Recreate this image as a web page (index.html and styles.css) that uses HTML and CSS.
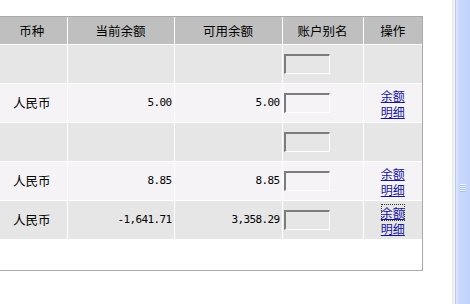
FILE: index.html
```html
<!DOCTYPE html>
<html>
<head>
<meta charset="utf-8">
<link rel="stylesheet" href="styles.css">
</head>
<body>
<div class="page">
  <div class="main">
    <div class="box">
      <table class="grid">
        <colgroup>
          <col class="c1"><col class="c2"><col class="c3"><col class="c4"><col class="c5">
        </colgroup>
        <thead>
          <tr class="head">
            <th>币种</th><th>当前余额</th><th>可用余额</th><th>账户别名</th><th class="last">操作</th>
          </tr>
        </thead>
        <tbody>
          <tr class="odd">
            <td></td><td class="num"></td><td class="num"></td>
            <td class="alias"><input class="field" type="text"></td><td class="last"></td>
          </tr>
          <tr class="even">
            <td class="cur">人民币</td><td class="num">5.00</td><td class="num">5.00</td>
            <td class="alias"><input class="field" type="text"></td>
            <td class="last ops"><a href="#">余额</a><a href="#">明细</a></td>
          </tr>
          <tr class="odd">
            <td></td><td class="num"></td><td class="num"></td>
            <td class="alias"><input class="field" type="text"></td><td class="last"></td>
          </tr>
          <tr class="even">
            <td class="cur">人民币</td><td class="num">8.85</td><td class="num">8.85</td>
            <td class="alias"><input class="field" type="text"></td>
            <td class="last ops"><a href="#">余额</a><a href="#">明细</a></td>
          </tr>
          <tr class="odd">
            <td class="cur">人民币</td><td class="num">-1,641.71</td><td class="num">3,358.29</td>
            <td class="alias"><input class="field" type="text"></td>
            <td class="last ops"><a href="#" class="focus">余额</a><a href="#">明细</a></td>
          </tr>
        </tbody>
      </table>
    </div>
  </div>
  <div class="scrollbar">
    <div class="track"></div>
    <div class="thumb">
      <div class="grip"><span></span><span></span><span></span><span></span></div>
    </div>
  </div>
</div>
</body>
</html>
```
FILE: styles.css
```css
html, body {
  margin: 0;
  padding: 0;
  background: #ffffff;
}
body {
  font-family: "Noto Sans CJK SC", "Noto Sans", sans-serif;
  font-size: 12px;
  color: #000;
}
.page {
  display: flex;
  width: 470px;
  height: 304px;
  overflow: hidden;
}
.main {
  width: 452px;
  flex: none;
  padding-top: 16px;
  overflow: hidden;
}
.box {
  margin-left: -4px;
  width: 425px;
  height: 253px;
  border: 1px solid #a9a9a9;
}
.grid {
  border-collapse: collapse;
  table-layout: fixed;
  width: 425px;
}
.c1 { width: 70px; }
.c2 { width: 107px; }
.c3 { width: 108px; }
.c4 { width: 81px; }
.c5 { width: 59px; }
.grid th, .grid td {
  padding: 0;
  border-right: 1px solid #ffffff;
  border-bottom: 1px solid #ffffff;
  text-align: center;
  vertical-align: middle;
  line-height: 16px;
  font-size: 12.5px;
}
.grid th.last, .grid td.last {
  border-right: none;
}
.head th {
  height: 27px;
  background: #bfbfbf;
  font-weight: normal;
}
.grid tbody td {
  height: 38px;
}
.odd td { background: #e6e6e6; }
.even td { background: #f6f3f6; }
.grid td.num {
  text-align: right;
  padding-right: 2px;
  font-family: "DejaVu Sans Mono", "Liberation Mono", monospace;
  font-size: 11px;
  letter-spacing: -0.62px;
}
.grid td.alias {
  text-align: left;
  padding-left: 1px;
}
.field {
  display: block;
  box-sizing: border-box;
  width: 46px;
  height: 20px;
  margin: 0;
  padding: 0;
  background: transparent;
  border-style: solid;
  border-width: 2px 1px 1px 2px;
  border-color: #7c7c7c #ffffff #ffffff #7c7c7c;
  outline: none;
}
.grid td.ops {
  font-size: 12px;
}
.ops a {
  display: block;
  width: max-content;
  margin: 0 auto;
  line-height: 17px;
  height: 17px;
  color: #16169a;
  text-decoration: underline;
}
.ops a + a {
  margin-top: -1px;
}
.ops a.focus {
  outline: 1px dotted #333;
  outline-offset: -1px;
}
.scrollbar {
  display: flex;
  width: 18px;
  flex: none;
}
.track {
  width: 3px;
  background: #f4f3ef;
  border-left: 1px solid #e8e8e4;
  box-sizing: border-box;
}
.thumb {
  width: 15px;
  box-sizing: border-box;
  background: linear-gradient(to right, #dde7fc 0, #c8d8fb 3px, #c1d3fb 100%);
  border-left: 1px solid #b8cbf3;
  padding-top: 184px;
}
.grip {
  display: flex;
  flex-direction: column;
  gap: 1px;
  margin-left: 4px;
  width: 6px;
}
.grip span {
  height: 1px;
  background: #eef3fe;
  box-shadow: 0 1px 0 #a9bff0;
}
```
